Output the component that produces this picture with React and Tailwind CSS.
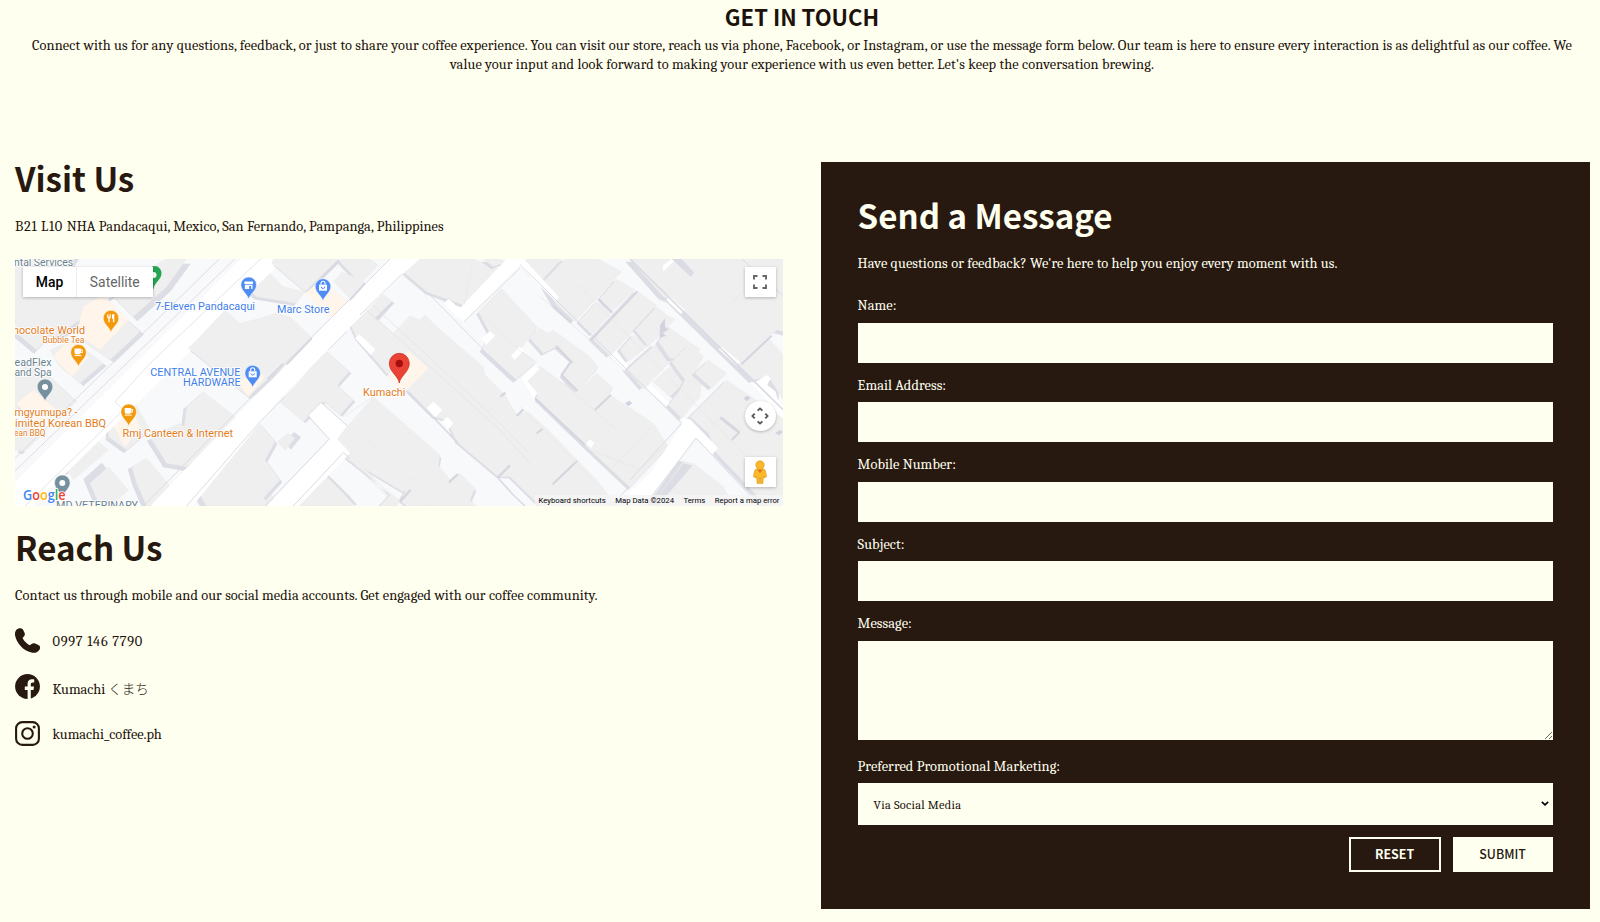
import React from "react";

const serif = "font-[Cambria,Caladea,'Noto_Serif',serif]";
const sans = "font-['Noto_Sans_CJK_JP',sans-serif]";

/* Buildings: [outline, shadow dx, shadow dy] */
const westBuildings = [
  ["0,0 240,0 190,80 120,140 40,210 0,210", 8, 10],
  ["100,140 300,140 440,60 500,27 560,27 500,110 400,200 330,130 240,210 150,270 60,190", 12, 14],
  ["45,170 70,150 170,235 110,300 45,245", -8, 12],
  ["250,175 310,150 420,245 330,330 250,275", 12, 8],
  ["150,300 215,270 310,340 240,400 175,345", 10, 8],
  ["45,370 100,330 190,420 150,475 100,440 45,480", 10, 10],
  ["130,430 170,400 245,470 200,520 150,490", 10, 8],
  ["45,520 90,500 150,560 110,610 45,600", 10, 10],
  ["690,70 735,27 820,27 800,60 850,110 915,125 890,160 770,140", -8, 8],
  ["330,490 400,450 450,540 380,600 325,560", -8, 10],
  ["560,470 610,425 730,520 670,600 550,560", -10, 8],
  ["450,560 540,520 640,590 560,650 500,640", -10, 12],
  ["190,640 290,570 325,600 220,690", -22, -14],
  ["270,700 325,650 385,720 330,770 300,770", -20, -12],
  ["395,650 440,625 520,720 480,768 440,768 410,700", -12, 8],
  ["600,735 680,610 780,690 840,768 620,768", -14, 10],
];
const midBuildings = [
  ["40,27 235,27 135,125 35,40", 6, 8],
  ["245,27 330,27 355,45 300,100 240,35", -6, 6],
  ["222,95 245,65 315,95 275,150", 6, 6],
  ["-175,255 -105,180 -60,220 0,205 45,190 90,200 155,262 80,345 20,390 -35,440 -215,295", 6, 8],
  ["330,165 365,130 398,155 350,207 315,185", 5, 5],
  ["430,65 470,27 640,27 725,60 610,165 500,125", -4, 8],
  ["670,27 720,27 740,35 700,50", -6, 8],
  ["270,220 315,180 400,250 450,198 480,210 495,195 525,225 670,350 675,375 735,435 770,495 805,485 870,545 1010,690 1070,768 840,768 750,680 715,680 590,575 560,510 520,500 440,420 380,370 290,265", -4, 5],
  ["655,185 725,115 835,235 805,265 780,300 830,335 790,370 765,390 665,298 690,250", -6, 8],
  ["122,390 195,300 268,365 232,405 280,450 240,495 190,455 130,515 60,455", 6, 5],
  ["232,565 340,440 540,615 535,645 570,690 600,670 645,715 630,750 650,768 500,768 260,625", 4, 8],
  ["52,575 85,550 105,565 75,602", 18, -3],
  ["-90,610 -45,560 0,520 45,575 15,630 60,690 10,745", 7, 7],
  ["110,768 195,675 260,740 285,768", 6, -4],
  ["260,625 270,610 390,735 360,768 410,768 440,720 500,768 440,768", -6, 2],
];
const eastBuildings = [
  ["20,27 125,27 70,90 15,40", -5, 10],
  ["70,95 135,27 235,27 305,65 165,215 110,165", -14, 6],
  ["240,145 290,88 345,120 275,185", -8, 4],
  ["175,215 230,155 275,188 215,255", -6, 4],
  ["215,265 350,122 410,165 340,245 270,318", -10, 5],
  ["320,360 405,285 455,330 370,418", -12, 3],
  ["345,240 410,170 440,195 465,208 420,255 385,290", -8, 3],
  ["300,300 340,255 380,290 325,335", -8, 3],
  ["415,275 445,230 540,298 515,330 450,325", -9, 8],
  ["400,395 450,350 495,395 450,440", 6, 5],
  ["455,335 510,280 550,320 525,365 545,400 540,440 485,505 445,465 480,420 495,390", -8, 6],
  ["525,370 565,330 620,370 575,415", -10, 6],
  ["510,500 620,390 810,520 810,768 740,768 590,610 565,550", -10, 6],
  ["30,265 60,235 85,250 100,240 210,320 235,355 170,425 125,375 160,335 110,290 70,310", -6, 7],
  ["50,445 110,385 170,430 230,370 280,415 225,480 270,435 400,520 445,590 330,712 200,590", -6, 8],
  ["20,390 60,348 110,385 55,440", -8, 5],
  ["330,27 810,27 810,250 770,240 745,265 790,315 790,450 745,380 700,390 455,150 430,140", -14, 8],
  ["395,768 490,635 520,640 610,710 640,768", -14, -2],
  ["565,545 600,505 655,550 600,595", 6, -6],
];

const Buildings = ({ list }) =>
  list.map(([p, dx, dy], i) => (
    <g key={i}>
      <polygon points={p} transform={`translate(${dx} ${dy})`} fill="#dddde5" />
      <polygon points={p} fill="#efefef" stroke="#e9e9eb" strokeWidth="1" />
    </g>
  ));

const Pin = ({ x, y, color, children }) => (
  <g transform={`translate(${x} ${y})`}>
    <path d="M0 22.5C-.7 17.5-7.8 14-7.8 7.8a7.8 7.8 0 0 1 15.6 0C7.8 14 .7 17.5 0 22.5Z" fill={color} stroke="#fff" strokeWidth=".5" />
    <g fill="#fff">{children}</g>
  </g>
);
const Cup = () => (
  <>
    <path d="M-4 4h6.400v1h1.800v3.500H2.300L1.500 9.700h-4.500L-4 8.500Zm6.400 2v1.500h.8V6Z" fillRule="evenodd" />
    <path d="M-4 10.600h7v1h-7z" />
  </>
);
const Bag = () => (
  <>
    <path d="M-4 6h8v6h-8z" />
    <path d="M-2 6V4.500a2 2 0 0 1 4 0V6" fill="none" stroke="#fff" strokeWidth="1.100" />
    <path d="M-1.800 8a1.800 1.800 0 0 0 3.600 0" fill="none" stroke="#4f8df5" strokeWidth="1" />
  </>
);

const Label = ({ x, y, w, size = 10.6, fill, children }) => (
  <text x={x} y={y} textLength={w} lengthAdjust="spacingAndGlyphs" fontSize={size} fill={fill} stroke="#fff" strokeWidth="1.6" strokeLinejoin="round" paintOrder="stroke">
    {children}
  </text>
);

const orange = "#e37c1a";
const blue = "#3f7ee8";
const slate = "#6b8390";

function MapArt() {
  return (
    <svg className="block h-[247px] w-[768px] font-[Roboto,sans-serif]" viewBox="15 259 768 247">
      <rect x="15" y="259" width="768" height="247" fill="#f7f9fb" />
      <g transform="translate(0 250) scale(.33333)">
        <Buildings list={westBuildings} />
        <g fill="#fff5ea">
          <path d="m250 170 60-35 75 75-85 90-70-50Z" />
          <path d="m160 320 45-50 60 50-50 60Z" />
          <path d="m50 460 50-40 70 60-60 60Z" />
          <path d="m325 500 60-50 35 80-45 60Z" />
        </g>
        <path d="M20 715 740 10H870L75 790H20Z" fill="#fff" />
        <path d="M40 640 690 10H740L40 700Z" fill="#f9f9fb" />
        <path d="m45 625 625-610M45 663 722 10" fill="none" stroke="#dcdde3" strokeWidth="3" />
        <path d="M75 768 370 480l-25-25 108-118L800 10" fill="none" stroke="#dfe0e6" strokeWidth="2.500" />
      </g>
      <g transform="translate(260 250) scale(.33333)">
        <Buildings list={midBuildings} />
        <path d="m135 130 50-40 85 70-55 45Z M380 380l65-78 60 53-70 70Z M-65 400l50-45 30 25-50 60Z" fill="#fff5ea" />
        <path d="M-350 790 -30 455 0 425 200 220 390 27H480L425 75 60 445-220 790Z" fill="#fff" />
        <path d="M-350 768-10 425 212 205 390 27M-220 768 0 515 75 440M205 300l55-55M300 195 425 73" fill="none" stroke="#dcdde3" strokeWidth="3" />
        <path d="m145 495 38-38 78 72-30 38 40 42L95 790H0L208 567Z" fill="#fff" />
        <path d="m15 768 193-201-65-70 40-40 80 72M100 768l150-160 20 18" fill="none" stroke="#d8d9e2" strokeWidth="3" />
        <path d="m585 190 155-163h55L612 215Z M548 160l18-15 40 35-12 22Z" fill="#fff" />
        <path d="m612 215 170-162 28 27M550 158l16-13 25 22M500 125l165 168" fill="none" stroke="#dcdde3" strokeWidth="3" />
        <path d="m285 265 13-12 48 45-13 18Z m215 210 20-20 27 25-20 22Z m45 40 17-13 18 18-15 18Z m120-250 25-22 15 14-26 27Z m88 52 25-27 14 10-28 30Z" fill="#fff" />
        <path d="m338 165 340 315 130 130M320 180 715 535 810 640" fill="none" stroke="#e5e5e8" strokeWidth="2.500" />
        <path d="m325 570 135 122 75-75M670 500l60-70M340 440 250 500M270 630l110 110M655 185l155 145M640 27l-27 138" fill="none" stroke="#e8e8ea" strokeWidth="2" />
        <path d="m445 425 150 155M665 298l103 94M715 685l45 50 35 33" fill="none" stroke="#dadbe4" strokeWidth="5" />
        <path d="m713 683 37-37M420 755l32-36M567 697l27-25M770 498l20-20M722 440l14-12" stroke="#d6d6e0" strokeWidth="7" />
        <path d="m347 207 50-50M80 343l75-78M22 388l48-47M185 85l53-55M270 150l45-50" stroke="#d8d8e2" strokeWidth="6" />
      </g>
      <g transform="translate(520 250) scale(.33333)">
        <Buildings list={eastBuildings} />
        <path d="M0 27h12l105 115-10 12L0 52Z M283 304l42 43-12 16-40-42Z M390 402l58 58-12 12-55-55Z M5 385l38-38 16 9-37 37 30 37-10 15Z M450 140l45 40-12 12-44-42Z M605 290l55 45-10 12-55-50Z M700 400l40-25 12 10-10 20 25 20 5 20 18 22v40L690 395Z M430 45l25-18 8 6-35 33Z M198 580l13-12 12 12-10 14Z" fill="#fff" />
        <path d="m485 505 25 2 85 88-20 20-45-52L350 790H285l45-65 60-55 95-145Z" fill="#fff" />
        <path d="M0 44 485 520 330 690M395 740 528 564 720 768M270 768l55-55M665 27l125 110" fill="none" stroke="#dadbe3" strokeWidth="3" />
        <path d="M330 27 790 480" fill="none" stroke="#dadbe4" strokeWidth="5" />
        <path d="M455 27h30l36 40-8 14Z" fill="#dbdbe4" />
        <path d="M395 768 490 640l28 6-105 122Z" fill="#dcdce5" />
        <path d="m212 272 140-148M100 170l53 48M235 148l42 40M108 287l45 48-28 40 48 48M45 445l150 140M600 503l57 45-22 22M98 703l73-70M225 480l48-46M50 550l18-14M665 342l90-85" fill="none" stroke="#d5d5e0" strokeWidth="6" />
        <path d="M170 100 700 640M60 140l380 330M130 400l160 140M0 470l210 210M275 655l115-120M210 600l150 58 80-75M630 165l90-95" fill="none" stroke="#e6e6e9" strokeWidth="2" />
        <path d="m315 460 12-8 10 7-12 10Z m355-15 12-8 10 7-12 10Z m95 105 14-10 10 6-12 10Z m-345-325 15-20 0 25 12 8-20 10 12 10-20 5" fill="#d3d3df" />
      </g>

      <Label x="14" y="266" w="59" fill={slate}>ntal Services</Label>
      <path d="M152 271.500V266.500c5-2 9.500 2 9.500 6.500 0 7-7 9-8 16h-1.500Z" fill="#24a452" />
      <circle cx="153.500" cy="275" r="3" fill="#fff" />

      <Pin x={248.700} y={277} color="#4f8df5">
        <path d="M-4.300 4.500h8.600V7h-8.600zM-3.800 7.800h7.600V12h-7.600z" />
        <path d="M.5 9h2v3h-2z" fill="#4f8df5" />
      </Pin>
      <Pin x={323} y={278.700} color="#4f8df5"><Bag /></Pin>
      <Pin x={252.700} y={365.300} color="#4f8df5"><Bag /></Pin>
      <Pin x={111} y={310.300} color="#f29a0c">
        <path d="M-3.800 4h.8v2.500h.6V4h.8v2.500h.6V4h.8v3.200l-1.200 1V12h-1.200V8.200l-1.200-1zM1 5c0-1 1.800-1.500 2.300-1v8H2V8.500H1z" />
      </Pin>
      <Pin x={78.500} y={344.500} color="#f29a0c"><Cup /></Pin>
      <Pin x={128.700} y={404} color="#f29a0c"><Cup /></Pin>
      <Pin x={45} y={379} color="#76909d"><circle cy="8" r="3" /></Pin>
      <Pin x={62.300} y={475} color="#76909d"><circle cy="8" r="3" /></Pin>

      <Label x="155" y="310.300" w="100" fill={blue}>7-Eleven Pandacaqui</Label>
      <Label x="277" y="312.700" w="52.500" fill={blue}>Marc Store</Label>
      <Label x="150.300" y="375.700" w="90" fill={blue}>CENTRAL AVENUE</Label>
      <Label x="183" y="386.300" w="57.500" fill={blue}>HARDWARE</Label>
      <Label x="13" y="333.500" w="72" fill={orange}>hocolate World</Label>
      <Label x="42.500" y="342.700" w="42" size={8.400} fill={orange}>Bubble Tea</Label>
      <Label x="14.500" y="366" w="37" fill={slate}>eadFlex</Label>
      <Label x="14.500" y="375.500" w="37" fill={slate}>and Spa</Label>
      <Label x="14.500" y="415.500" w="63" fill={orange}>mgyumupa? -</Label>
      <Label x="15" y="427" w="91" fill={orange}>imited Korean BBQ</Label>
      <Label x="14" y="436" w="31.500" size={8.400} fill={orange}>ean BBQ</Label>
      <Label x="122.500" y="437.300" w="110.500" fill={orange}>Rmj Canteen &amp; Internet</Label>
      <Label x="363" y="395.500" w="42.500" fill={orange}>Kumachi</Label>
      <Label x="56" y="509" w="82" fill={slate}>MD VETERINARY</Label>

      <path d="M399.300 383C398.500 376 389.300 372 389.300 363.300a10 10 0 0 1 20 0C409.300 372 400.100 376 399.300 383Z" fill="#ea4335" stroke="#c5221f" strokeWidth=".7" />
      <circle cx="399.300" cy="363.500" r="3.700" fill="#a50e0e" />

      <text y="500" x="23" fontSize="14.500" fontWeight="600" textLength="42.500" lengthAdjust="spacingAndGlyphs" stroke="#fff" strokeWidth="1.600" paintOrder="stroke" className="font-['Open_Sans',sans-serif]">
        <tspan fill="#4285f4">G</tspan><tspan fill="#ea4335">o</tspan><tspan fill="#fbbc04">o</tspan><tspan fill="#4285f4">g</tspan><tspan fill="#34a853">l</tspan><tspan fill="#ea4335">e</tspan>
      </text>
    </svg>
  );
}

function GoogleMap() {
  return (
    <div className="relative mt-[21.700px] h-[247px] overflow-hidden font-[Roboto,sans-serif]">
      <MapArt />
      <div className="absolute left-2 top-2 flex h-[30.500px] items-center bg-white text-center text-[13.900px] shadow-[0_1px_3px_rgba(0,0,0,0.25)]">
        <span className="w-[54px] border-r border-[#ebebeb] font-medium leading-[30px] text-black">Map</span>
        <span className="w-[75.500px] leading-[30px] text-[#666]">Satellite</span>
      </div>
      <div className="absolute right-[7.500px] top-2 flex size-[30.500px] items-center justify-center bg-white shadow-[0_1px_3px_rgba(0,0,0,0.25)]">
        <svg className="size-[14px]" viewBox="0 0 14 14" fill="none" stroke="#666" strokeWidth="1.900">
          <path d="M1 4.500V1h3.500M9.500 1H13v3.500M13 9.500V13H9.500M4.500 13H1V9.500" />
        </svg>
      </div>
      <div className="absolute right-[7.500px] top-[142px] flex size-[30.500px] items-center justify-center rounded-full bg-white shadow-[0_1px_3px_rgba(0,0,0,0.25)]">
        <svg className="size-[18px]" viewBox="0 0 18 18" fill="none" stroke="#555" strokeWidth="1.800">
          <path d="M6.600 3.700 9 1.400l2.400 2.300M6.600 14.300 9 16.600l2.400-2.300M3.700 6.600 1.400 9l2.300 2.400M14.300 6.600 16.600 9l-2.300 2.400" />
        </svg>
      </div>
      <div className="absolute right-[7.500px] top-[198px] flex size-[30.500px] items-center justify-center bg-white shadow-[0_1px_3px_rgba(0,0,0,0.25)]">
        <svg className="h-[24px] w-[14px]" viewBox="0 0 14 24" fill="#fbb929" stroke="#dd9a20" strokeWidth=".7">
          <path d="M3 9h8c1.500 1 2 5 2.500 7.500L11.500 18l-1-2-.7 7.500H7.500L7 17l-.5 6.500H4.200L3.500 16l-1 2-2-1.500C1 14 1.500 10 3 9Z" />
          <circle cx="7" cy="5" r="4.200" />
          <path d="M4 9.200c1.500 1.200 4.500 1.200 6 0L7 13Z" fill="#e3701e" stroke="none" />
        </svg>
      </div>
      <div className="absolute bottom-0 right-0 flex h-[10.500px] items-center gap-[9.500px] whitespace-nowrap bg-[#f5f5f5]/80 pl-1 pr-[3.500px] text-[7.750px] leading-[10px] text-black">
        <span>Keyboard shortcuts</span>
        <span>Map Data ©2024</span>
        <span>Terms</span>
        <span>Report a map error</span>
      </div>
    </div>
  );
}

const PhoneIcon = () => (
  <svg className="size-[25px]" viewBox="0 0 25 25" fill="#27190f">
    <path d="M1.200 2.100C3-.2 6.200-.5 7.800 1.300l1.700 3.500c.8 1.600.3 2.900-.8 4l-1.100 1c.9 2.800 4.300 6.200 7.400 7.500l1.500-1.200c1-.9 2.300-1.200 3.600-.6l3.300 1.500c2 1 2.200 3.300.9 4.900-1.900 2.400-4.600 3.400-7.900 2.600C8.300 22.800 1.700 15.500.1 7.600-.3 5.400.1 3.500 1.200 2.100Z" />
  </svg>
);
const FacebookIcon = () => (
  <svg className="size-[25px]" viewBox="0 0 25 25">
    <circle cx="12.500" cy="12.500" r="12.400" fill="#27190f" />
    <path d="M12.600 25v-9H9.800v-3.500h2.800v-2.600c0-3 1.700-4.600 4.400-4.600.9 0 1.700.1 2.200.2v2.900h-1.400c-1.500 0-2 .8-2 1.900v2.200h3.200l-.5 3.500h-2.700v9Z" fill="#fffff0" />
  </svg>
);
const InstagramIcon = () => (
  <svg className="size-[25px]" viewBox="0 0 25 25" fill="none" stroke="#27190f" strokeWidth="2.100">
    <rect x="1.100" y="1.100" width="22.800" height="22.800" rx="6.200" />
    <circle cx="12.500" cy="12.500" r="5.300" />
    <circle cx="19.100" cy="5.900" r="1.500" fill="#27190f" stroke="none" />
  </svg>
);

const contacts = [
  { icon: PhoneIcon, text: "0997 146 7790", spacing: "tracking-[0.710px]" },
  { icon: FacebookIcon, text: "Kumachi ", kana: "くまち", spacing: "tracking-[-0.050px]" },
  { icon: InstagramIcon, text: "kumachi_coffee.ph", spacing: "tracking-[-0.040px]" },
];

const Field = ({ label }) => (
  <label className="mb-[13px] block">
    <span className="block leading-5">{label}</span>
    <input className="mt-[6.500px] block h-10 w-full bg-[#fffff0] px-4 text-black outline-none" />
  </label>
);

export default function App() {
  return (
    <div className={`h-[922px] overflow-hidden bg-[#fffff0] text-[14.400px] text-[#1c120b] ${serif}`}>
      <header className="h-[162px] pl-[16px] pr-[12px] text-center">
        <h1 className={`text-[22px] font-bold leading-8 text-[#1c120b] ${sans}`}>GET IN TOUCH</h1>
        <p className="mt-[4px] leading-[19.300px] tracking-[0.096px]">
          Connect with us for any questions, feedback, or just to share your coffee experience. You can visit our store, reach us via phone, Facebook, or Instagram, or use the message form below. Our team is here to ensure every interaction is as delightful as our coffee. We
          <br />
          value your input and look forward to making your experience with us even better. Let's keep the conversation brewing.
        </p>
      </header>
      <main className="grid grid-cols-[768px_769px] items-start gap-[37.600px] pl-[15px]">
        <section>
          <h2 className={`text-[33.100px] font-bold leading-8 text-[#27190f] ${sans}`}>Visit Us</h2>
          <p className="mt-[23.300px] leading-5 tracking-[0.050px]">
            <span className="tracking-[0.650px]">B21 L10 </span>NHA Pandacaqui, Mexico, San Fernando, Pampanga, Philippines
          </p>
          <GoogleMap />
          <h2 className={`mt-[25px] text-[33.100px] font-bold leading-8 text-[#27190f] ${sans}`}>Reach Us</h2>
          <p className="mt-[23.300px] leading-5 tracking-[0.077px]">Contact us through mobile and our social media accounts. Get engaged with our coffee community.</p>
          <ul className="mt-[21.700px] flex flex-col gap-[21.300px]">
            {contacts.map(({ icon: Icon, text, kana, spacing }) => (
              <li key={text} className="flex h-[25px] items-center gap-[12.500px]">
                <Icon />
                <span className={`pt-[4px] leading-5 ${spacing}`}>
                  {text}
                  {kana && <span className="font-['Noto_Sans_CJK_JP',sans-serif] text-[13.500px] font-light">{kana}</span>}
                </span>
              </li>
            ))}
          </ul>
        </section>
        <section className="h-[747px] bg-[#27190f] pl-[37px] pr-[37px] pt-[36.700px] tracking-[0.070px] text-[#fffff0]">
          <h2 className={`text-[33.100px] font-bold leading-8 tracking-normal ${sans}`}>Send a Message</h2>
          <p className="mt-[23.500px] leading-5 tracking-[0.106px]">Have questions or feedback? We're here to help you enjoy every moment with us.</p>
          <form className="mt-[22px]">
            <Field label="Name:" />
            <Field label="Email Address:" />
            <Field label="Mobile Number:" />
            <Field label="Subject:" />
            <label className="block">
              <span className="block leading-5">Message:</span>
              <textarea className="mt-[6.500px] block h-[99.500px] w-full bg-[#fffff0] px-4 text-black outline-none" />
            </label>
            <label className="mt-[16.500px] block">
              <span className="block leading-5">Preferred Promotional Marketing:</span>
              <span className="mt-[6.500px] flex h-[41.500px] items-center justify-between bg-[#fffff0] pl-4 pr-[4px] text-[12.400px] text-[#1c120b]">
                <span className="pt-[2px] tracking-[0.250px]">Via Social Media</span>
                <svg className="h-[5px] w-[8px]" viewBox="0 0 8 5" fill="none" stroke="#000" strokeWidth="1.700">
                  <path d="m.8.8 3.200 3 3.200-3" />
                </svg>
              </span>
            </label>
            <div className={`mt-[12px] flex justify-end gap-[12px] text-[12.400px] leading-none tracking-normal ${sans}`}>
              <button type="reset" className="h-[35.500px] w-[92px] border-2 border-[#fffff0] font-bold">RESET</button>
              <button type="button" className="h-[35.500px] w-[100px] bg-[#fffff0] font-medium text-[#27190f]">SUBMIT</button>
            </div>
          </form>
        </section>
      </main>
    </div>
  );
}
